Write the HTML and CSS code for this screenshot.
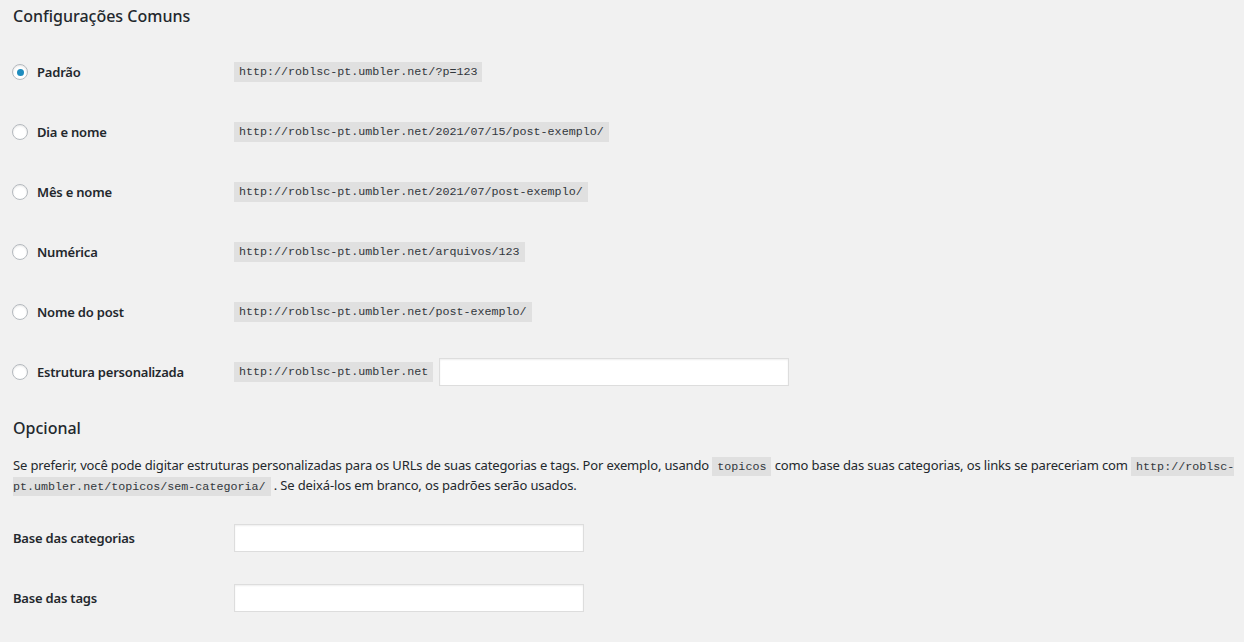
FILE: index.html
```html
<!DOCTYPE html>
<html lang="pt-BR">
<head>
    <meta charset="UTF-8">
    <title>Links permanentes</title>
    <link rel="stylesheet" href="styles.css">
</head>
<body>
    <div class="wrap">
        <h2 class="title">Configurações Comuns</h2>
        <div class="form-table">
            <div class="row">
                <label class="th"><input type="radio" name="selection" checked> Padrão</label>
                <div class="td"><code>http://roblsc-pt.umbler.net/?p=123</code></div>
            </div>
            <div class="row">
                <label class="th"><input type="radio" name="selection"> Dia e nome</label>
                <div class="td"><code>http://roblsc-pt.umbler.net/2021/07/15/post-exemplo/</code></div>
            </div>
            <div class="row">
                <label class="th"><input type="radio" name="selection"> Mês e nome</label>
                <div class="td"><code>http://roblsc-pt.umbler.net/2021/07/post-exemplo/</code></div>
            </div>
            <div class="row">
                <label class="th"><input type="radio" name="selection"> Numérica</label>
                <div class="td"><code>http://roblsc-pt.umbler.net/arquivos/123</code></div>
            </div>
            <div class="row">
                <label class="th"><input type="radio" name="selection"> Nome do post</label>
                <div class="td"><code>http://roblsc-pt.umbler.net/post-exemplo/</code></div>
            </div>
            <div class="row">
                <label class="th"><input type="radio" name="selection"> Estrutura personalizada</label>
                <div class="td">
                    <code>http://roblsc-pt.umbler.net</code>
                    <input type="text" class="regular-text">
                </div>
            </div>
        </div>

        <h2 class="title opcional">Opcional</h2>
        <p class="desc">Se preferir, você pode digitar estruturas personalizadas para os URLs de suas categorias e tags. Por exemplo, usando <code>topicos</code> como base das suas categorias, os links se pareceriam com <code>http://roblsc-pt.umbler.net/topicos/sem-categoria/</code> . Se deixá-los em branco, os padrões serão usados.</p>

        <div class="form-table optional">
            <div class="row">
                <label class="th" for="category_base">Base das categorias</label>
                <div class="td"><input type="text" id="category_base" class="regular-text"></div>
            </div>
            <div class="row">
                <label class="th" for="tag_base">Base das tags</label>
                <div class="td"><input type="text" id="tag_base" class="regular-text"></div>
            </div>
        </div>
    </div>
</body>
</html>
```

FILE: styles.css
```css
body {
    margin: 0;
    background: #f1f1f1;
    color: #23282d;
    font-family: "Noto Sans", "Open Sans", sans-serif;
    font-size: 13px;
    line-height: 1.4;
}
.wrap {
    padding: 0 8px 0 13px;
}
.title {
    font-size: 16px;
    font-weight: 500;
    line-height: 22px;
    margin: 5px 0 15px;
}
.opcional {
    margin: 15px 0 16px;
}
.form-table {
    display: flex;
    flex-direction: column;
}
.optional {
    margin-top: 13px;
}
.row {
    display: grid;
    grid-template-columns: 221px 1fr;
    align-items: center;
    height: 60px;
}
.th {
    font-size: 13px;
    font-weight: 600;
    letter-spacing: -0.2px;
    display: flex;
    align-items: center;
}
.td {
    display: flex;
    align-items: center;
    gap: 6px;
}
code {
    font-family: "Liberation Mono", monospace;
    font-size: 11.7px;
    line-height: 15px;
    letter-spacing: 0;
    padding: 3px 5px 2px;
    background: rgba(0, 0, 0, 0.07);
    color: #32373c;
}
.desc {
    margin: 0;
    line-height: 20px;
    letter-spacing: -0.14px;
}
input[type=radio] {
    -webkit-appearance: none;
    appearance: none;
    width: 16px;
    height: 16px;
    margin: 0 9px 0 -1px;
    border: 1px solid #b4b9be;
    border-radius: 50%;
    background: #fff;
    box-shadow: inset 0 1px 2px rgba(0, 0, 0, 0.1);
    display: inline-flex;
    align-items: center;
    justify-content: center;
}
input[type=radio]:checked::before {
    content: "";
    width: 7px;
    height: 7px;
    border-radius: 50%;
    background: #1e8cbe;
}
.regular-text {
    width: 350px;
    height: 28px;
    box-sizing: border-box;
    margin: 0;
    border: 1px solid #ddd;
    background: #fff;
    box-shadow: inset 0 1px 2px rgba(0, 0, 0, 0.07);
}
```
